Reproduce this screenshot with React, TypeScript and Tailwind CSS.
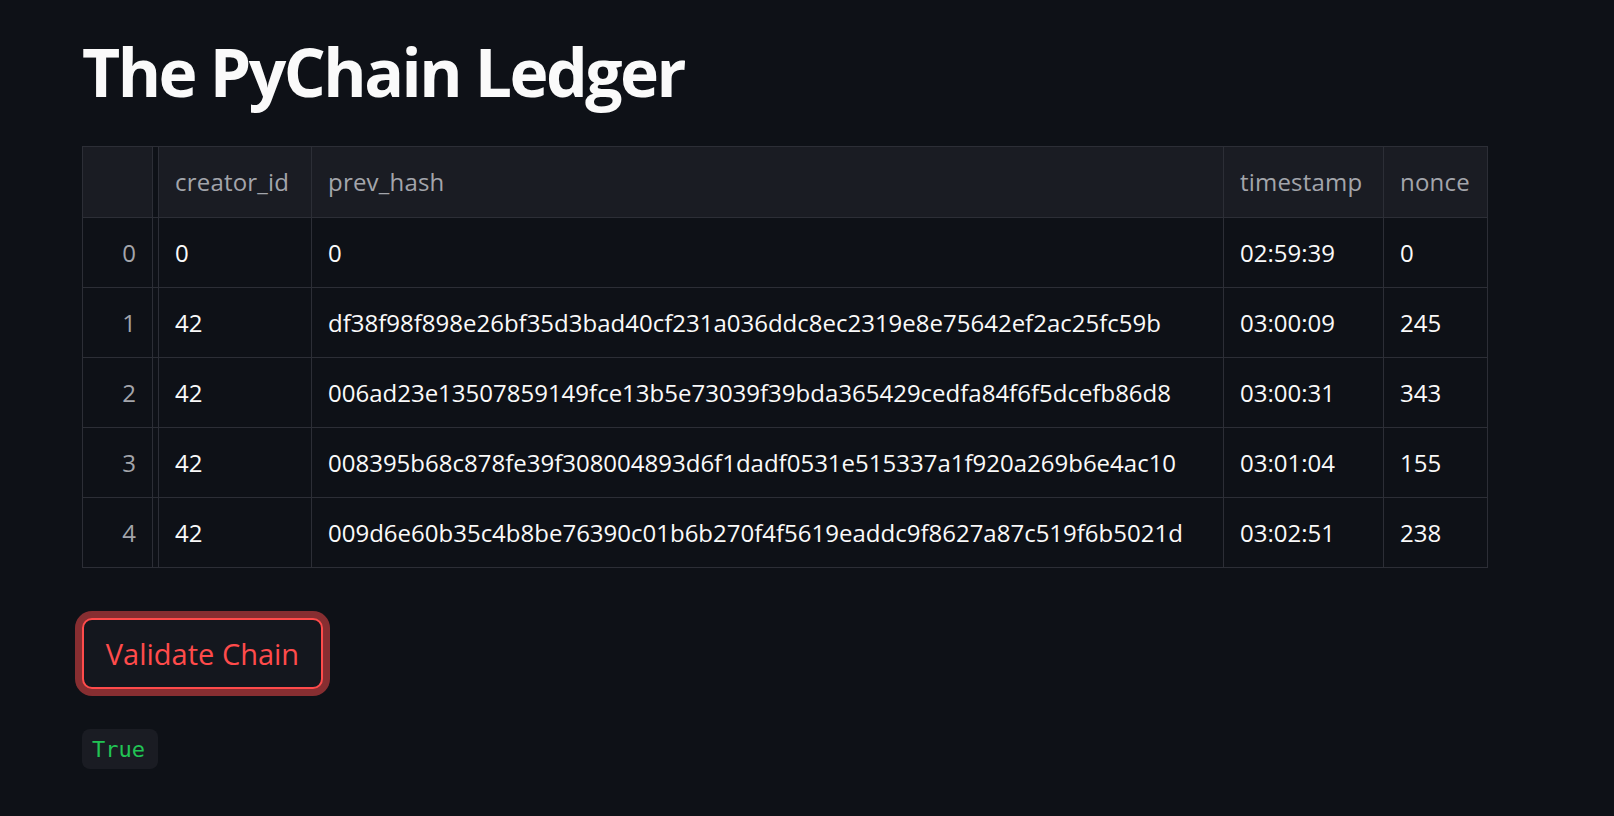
const columns = ['creator_id', 'prev_hash', 'timestamp', 'nonce']

const blocks = [
  { creator_id: '0', prev_hash: '0', timestamp: '02:59:39', nonce: '0' },
  { creator_id: '42', prev_hash: 'df38f98f898e26bf35d3bad40cf231a036ddc8ec2319e8e75642ef2ac25fc59b', timestamp: '03:00:09', nonce: '245' },
  { creator_id: '42', prev_hash: '006ad23e13507859149fce13b5e73039f39bda365429cedfa84f6f5dcefb86d8', timestamp: '03:00:31', nonce: '343' },
  { creator_id: '42', prev_hash: '008395b68c878fe39f308004893d6f1dadf0531e515337a1f920a269b6e4ac10', timestamp: '03:01:04', nonce: '155' },
  { creator_id: '42', prev_hash: '009d6e60b35c4b8be76390c01b6b270f4f5619eaddc9f8627a87c519f6b5021d', timestamp: '03:02:51', nonce: '238' },
]

const widths = ['w-[153px]', 'w-[912px]', 'w-[160px]', 'w-[104px]']

function LedgerTable() {
  return (
    <div className="flex w-[1406px] flex-col border-l border-t border-[#2c2e36]">
      <div className="flex h-[71px] bg-[#1a1c23] text-[#a3a5ab]">
        <div className="w-[70px] border-b border-r border-[#2c2e36]" />
        <div className="w-[6px] border-b border-r border-[#2c2e36] bg-[#0e1117]" />
        {columns.map((col, i) => (
          <div key={col} className={`${widths[i]} flex items-center border-b border-r border-[#2c2e36] pl-[16px] tracking-[0.2px]`}>
            {col}
          </div>
        ))}
      </div>
      {blocks.map((row, idx) => (
        <div key={idx} className="flex h-[70px]">
          <div className="flex w-[70px] items-center justify-end border-b border-r border-[#2c2e36] pr-[16px] text-[#a3a5ab]">
            {idx}
          </div>
          <div className="w-[6px] border-b border-r border-[#2c2e36]" />
          <div className={`${widths[0]} flex items-center border-b border-r border-[#2c2e36] pl-[16px]`}>{row.creator_id}</div>
          <div className={`${widths[1]} flex items-center border-b border-r border-[#2c2e36] pl-[16px]`}>{row.prev_hash}</div>
          <div className={`${widths[2]} flex items-center border-b border-r border-[#2c2e36] pl-[16px]`}>{row.timestamp}</div>
          <div className={`${widths[3]} flex items-center border-b border-r border-[#2c2e36] pl-[16px]`}>{row.nonce}</div>
        </div>
      ))}
    </div>
  )
}

export default function App() {
  return (
    <div className="min-h-screen bg-[#0e1117] font-['Open_Sans','Noto_Sans',sans-serif] text-[#fafafa]">
      <div className="flex flex-col items-start pl-[82px] pt-[38px]">
        <h1 className="m-0 text-[66px] font-bold leading-none tracking-[-2.5px]">The PyChain Ledger</h1>
        <div className="mt-[42px] text-[24px]">
          <LedgerTable />
        </div>
        <button className="mt-[50px] flex h-[71px] w-[241px] items-center justify-center rounded-[10px] border-2 border-[#ff4b4b] bg-[#14171e] text-[29px] text-[#ff4b4b] shadow-[0_0_0_7px_rgba(255,75,75,0.5)]">
          Validate Chain
        </button>
        <div className="mt-[40px] flex h-[40px] w-[76px] items-center rounded-[8px] bg-[#1a1c23] pl-[10px] font-['DejaVu_Sans_Mono',monospace] text-[22px] text-[#21c354]">
          True
        </div>
      </div>
    </div>
  )
}
